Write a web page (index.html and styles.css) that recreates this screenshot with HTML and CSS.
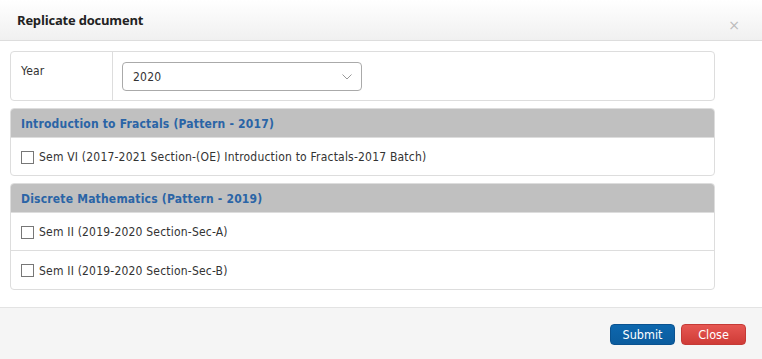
FILE: index.html
```html
<!DOCTYPE html>
<html>
<head>
<meta charset="utf-8">
<link rel="stylesheet" href="styles.css">
</head>
<body>
<div class="modal">
  <div class="modal-header">
    <h4 class="modal-title">Replicate document</h4>
    <span class="close-x">×</span>
  </div>
  <div class="modal-body">
    <div class="panel year-panel">
      <div class="year-label">Year</div>
      <div class="year-field">
        <div class="select">
          <span>2020</span>
          <svg class="chev" width="10" height="6" viewBox="0 0 10 6"><path d="M0.5 0.5 L5 5 L9.5 0.5" fill="none" stroke="#999" stroke-width="1"/></svg>
        </div>
      </div>
    </div>
    <div class="panel group">
      <div class="group-head">Introduction to Fractals (Pattern - 2017)</div>
      <div class="row"><span class="cb"></span>Sem VI (2017-2021 Section-(OE) Introduction to Fractals-2017 Batch)</div>
    </div>
    <div class="panel group">
      <div class="group-head">Discrete Mathematics (Pattern - 2019)</div>
      <div class="row"><span class="cb"></span>Sem II (2019-2020 Section-Sec-A)</div>
      <div class="row"><span class="cb"></span>Sem II (2019-2020 Section-Sec-B)</div>
    </div>
  </div>
  <div class="modal-footer">
    <button class="btn btn-blue">Submit</button>
    <button class="btn btn-red">Close</button>
  </div>
</div>
</body>
</html>
```
FILE: styles.css
```css
* { box-sizing: border-box; }
html, body { margin: 0; padding: 0; }
body {
  width: 762px;
  height: 359px;
  background: #fff;
  font-family: "DejaVu Sans Condensed", "DejaVu Sans", sans-serif;
  font-size: 12px;
  color: #333;
  overflow: hidden;
}
.modal { display: flex; flex-direction: column; height: 359px; }
.modal-header {
  height: 41px;
  flex: none;
  background: linear-gradient(#fff, #f0f0f0);
  border-bottom: 1px solid #ddd;
  display: flex;
  align-items: flex-start;
  justify-content: space-between;
  padding: 0 22px 0 17px;
}
.modal-title {
  margin: 11px 0 0;
  font-family: "Open Sans", sans-serif;
  font-size: 13px;
  font-weight: bold;
  color: #222;
  letter-spacing: -0.2px;
}
.close-x {
  margin-top: 18px;
  font-family: "DejaVu Sans", sans-serif;
  font-size: 14px;
  color: #bbb;
  line-height: 14px;
}
.modal-body {
  padding: 10px 47px 17px 10px;
  display: flex;
  flex-direction: column;
  gap: 7px;
  flex: none;
}
.panel {
  border: 1px solid #ddd;
  border-radius: 4px;
  overflow: hidden;
}
.year-panel { display: flex; height: 50px; }
.year-label {
  width: 102px;
  border-right: 1px solid #ddd;
  padding: 12px 0 0 10px;
  color: #333;
  letter-spacing: 0.2px;
}
.year-field { padding: 10px 0 0 9px; }
.select {
  width: 240px;
  height: 29px;
  border: 1px solid #aaa;
  border-radius: 4px;
  display: flex;
  align-items: center;
  justify-content: space-between;
  padding: 1px 9px 0 10px;
  font-size: 12px;
  color: #333;
  letter-spacing: 0.2px;
}
.chev { margin-top: -1px; }
.group-head {
  background: #c0c0c0;
  height: 29px;
  border-bottom: 1px solid #ddd;
  padding: 8px 10px 0;
  font-weight: bold;
  color: #2a64a6;
  font-size: 12px;
  letter-spacing: 0.2px;
}
.row {
  height: 37px;
  display: flex;
  align-items: center;
  padding: 1px 10px 0;
  color: #333;
  letter-spacing: 0.2px;
}
.row + .row { border-top: 1px solid #ddd; height: 39px; }
.cb {
  width: 13px;
  height: 13px;
  border: 1px solid #777;
  margin-right: 5px;
  background: #fff;
  flex: none;
}
.modal-footer {
  flex: 1;
  background: #f5f5f5;
  border-top: 1px solid #e3e3e3;
  display: flex;
  justify-content: flex-end;
  align-items: flex-start;
  gap: 6px;
  padding: 16px 16px 0 0;
}
.btn {
  width: 65px;
  height: 21px;
  border-radius: 4px;
  color: #fff;
  font-family: "DejaVu Sans Condensed", "DejaVu Sans", sans-serif;
  font-size: 12.5px;
  padding: 0;
  cursor: pointer;
}
.btn-blue {
  background: linear-gradient(#0d67ae, #0b5c9e);
  border: 1px solid #0a5290;
}
.btn-red {
  background: linear-gradient(#e65752, #cf3b37);
  border: 1px solid #c53a36;
}
```
